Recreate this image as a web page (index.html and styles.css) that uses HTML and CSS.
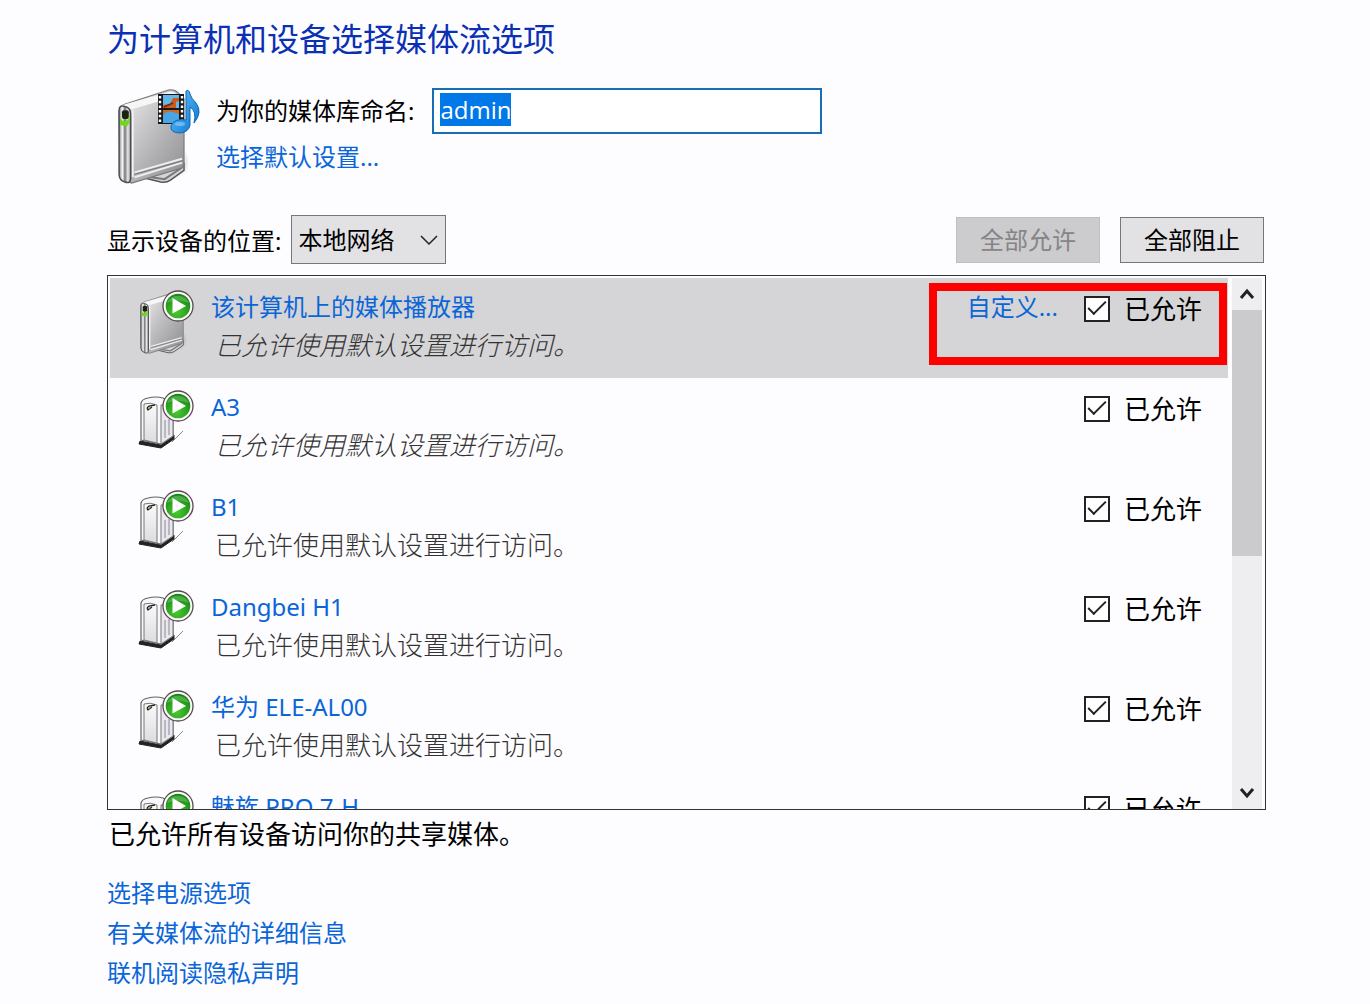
FILE: index.html
```html
<!DOCTYPE html>
<html lang="zh-CN">
<head>
  <meta charset="UTF-8">
  <meta name="viewport" content="width=device-width, initial-scale=1.0">
  <title>媒体流选项</title>
  <link rel="stylesheet" href="styles.css">
</head>
<body>
  <!-- shared icons -->
  <svg class="defs" aria-hidden="true">
    <defs>
      <linearGradient id="metal" x1="0" y1="0" x2="1" y2="1">
        <stop offset="0" stop-color="#f2f2f2"/>
        <stop offset="0.5" stop-color="#bcbcbe"/>
        <stop offset="1" stop-color="#8c8c90"/>
      </linearGradient>
      <linearGradient id="edge" x1="0" y1="0" x2="1" y2="0">
        <stop offset="0" stop-color="#8a8a8e"/>
        <stop offset="0.3" stop-color="#f6f6f6"/>
        <stop offset="0.5" stop-color="#77777c"/>
        <stop offset="0.75" stop-color="#e8e8ea"/>
        <stop offset="1" stop-color="#8a8a8e"/>
      </linearGradient>
      <linearGradient id="front" x1="0" y1="0" x2="0" y2="1">
        <stop offset="0" stop-color="#fbfbfc"/>
        <stop offset="1" stop-color="#dcdbdf"/>
      </linearGradient>
      <linearGradient id="note" x1="0" y1="0" x2="1" y2="1">
        <stop offset="0" stop-color="#6cc8f8"/>
        <stop offset="1" stop-color="#0a72d0"/>
      </linearGradient>
      <radialGradient id="green" cx="0.45" cy="0.75" r="0.7">
        <stop offset="0" stop-color="#4cc832"/>
        <stop offset="1" stop-color="#168a12"/>
      </radialGradient>
      <radialGradient id="shade">
        <stop offset="0" stop-color="#000" stop-opacity="0.35"/>
        <stop offset="1" stop-color="#000" stop-opacity="0"/>
      </radialGradient>
    </defs>
    <symbol id="drive" viewBox="0 0 72 98">
      <ellipse cx="50" cy="76" rx="26" ry="18" fill="url(#shade)"/>
      <path d="M24 91 L44 96 Q50 97 54 94 L68 84 V77 L40 86" fill="#d4d4d6" stroke="#55555a" stroke-width="1.5"/>
      <path d="M34 91 L48 93 L66 81" fill="none" stroke="#77777c" stroke-width="2"/>
      <path d="M1 24 Q1 18 6 16 L52 1 Q58 0 62 4 L68 10 V76 Q68 80 64 82 L14 97 L2 92 Z" fill="url(#metal)" stroke="#77777c" stroke-width="1.2"/>
      <path d="M3 17 L52 3 Q57 1 62 7 L14 21 Z" fill="#f6f6f6"/>
      <path d="M15 22 V91" stroke="#f4f4f4" stroke-width="2"/>
      <path d="M17 86 L66 72 M17 91 L66 76" stroke="#ededef" stroke-width="2"/>
      <path d="M17 88 L67 74" stroke="#74747a" stroke-width="1"/>
      <path d="M1 22 Q1 16 7 18 Q13 19 13 26 V92 Q13 98 7 96 Q1 94 1 88 Z" fill="url(#edge)" stroke="#4c4c50" stroke-width="1.5"/>
      <rect x="4" y="22" width="7" height="9" rx="2" fill="#18240c"/>
      <path d="M2 30 L5 33 H9 L12 29 V34 L9 39 L2 37 Z" fill="#6fd81c"/>
    </symbol>
    <symbol id="play" viewBox="0 0 32 32">
      <circle cx="16" cy="16" r="15" fill="#fff" stroke="#5c4650" stroke-width="1.3"/>
      <circle cx="16" cy="16" r="12.3" fill="url(#green)"/>
      <path d="M5 13 A12 12 0 0 1 27 13 Q16 8 5 13" fill="#7cc878" opacity="0.5"/>
      <path d="M10.500 8 L24 16 L10.500 23.500 Z" fill="#fff"/>
    </symbol>
    <symbol id="player" viewBox="0 0 56 66">
      <use href="#drive" x="2" y="2" width="46" height="62"/>
      <use href="#play" x="24" y="0" width="32" height="32"/>
    </symbol>
    <symbol id="device" viewBox="0 0 56 66">
      <path d="M34 52 L45 41" stroke="#888" stroke-width="1"/>
      <path d="M2 51 L23 55 L36 45 V49 L23 58 L1 54 Z" fill="#222" stroke="#222" stroke-width="1"/>
      <path d="M3 13 Q4 9 10 8 Q18 6 25 8 L35 13 L35 46 L23 54 L3 50 Z" fill="#f8f7f9" stroke="#66666a" stroke-width="1.2"/>
      <path d="M23 15 L35 14 V46 L23 54 Z" fill="#e9e8ec" stroke="#77777c" stroke-width="1"/>
      <path d="M6 14 Q12 12 19 15 V53 L6 50 Z" fill="url(#front)" stroke="#77777c" stroke-width="1"/>
      <path d="M27 30 V48 M31 29 V45" stroke="#aaa6b4" stroke-width="1.500"/>
      <path d="M17 15 L11 16 Q8 18 10 20 L14 17" fill="none" stroke="#222" stroke-width="1.3"/>
      <circle cx="11" cy="18" r="1" fill="#5fae3c"/>
      <use href="#play" x="24" y="0" width="32" height="32"/>
    </symbol>
  </svg>

  <main class="page">
    <h1>为计算机和设备选择媒体流选项</h1>

    <section class="library">
      <svg class="library-icon" viewBox="0 0 96 96" aria-hidden="true">
        <use href="#drive" x="11" y="1" width="70" height="95"/>
        <g>
          <rect x="51" y="6" width="26" height="30" fill="#18181c"/>
          <path d="M53 8 V36 M75 8 V36" stroke="#fff" stroke-width="2.400" stroke-dasharray="2.500 2.200"/>
          <rect x="56" y="7" width="16" height="13" fill="#62b8ea"/>
          <path d="M56 17 L63 16 L66 10 H72 V13 L69 14 V20 H56 Z" fill="#c85c1c"/>
          <path d="M57 19 L66 15" stroke="#6a2a10" stroke-width="1.500" fill="none"/>
          <rect x="56" y="22" width="16" height="13" fill="#48a6e4"/>
          <path d="M56 22 H72 V26 L66 24 Q60 22 56 27 Z" fill="#d06a20"/>
          <path d="M79 3 Q82 1 83 6 Q84 10 89 15 Q96 24 87 35 Q90 23 83 19 V37 Q82 44 73 45 Q63 45 64 38 Q67 30 79 32 Z" fill="url(#note)" stroke="#0a68b8" stroke-width="1"/>
          <ellipse cx="73" cy="36" rx="5" ry="2" fill="#8cd4fa" opacity="0.6"/>
        </g>
      </svg>
      <div class="library-form">
        <div class="name-row">
          <label for="libraryName">为你的媒体库命名:</label>
          <input type="text" id="libraryName" value="admin" autocomplete="off" spellcheck="false">
        </div>
        <a href="#">选择默认设置...</a>
      </div>
    </section>

    <section class="toolbar">
      <label for="location">显示设备的位置:</label>
      <div class="select">
        <select id="location">
          <option>本地网络</option>
          <option>所有网络</option>
        </select>
        <svg viewBox="0 0 18 12" aria-hidden="true"><path d="M1 2 L9 10 L17 2"/></svg>
      </div>
      <div class="buttons">
        <button type="button" disabled>全部允许</button>
        <button type="button">全部阻止</button>
      </div>
    </section>

    <section class="list">
      <ul class="devices">
        <li class="device selected">
          <svg class="device-icon" aria-hidden="true"><use href="#player"/></svg>
          <div class="info">
            <a href="#">该计算机上的媒体播放器</a>
            <p class="default">已允许使用默认设置进行访问。</p>
          </div>
          <a class="customize" href="#">自定义...</a>
          <label class="allow"><input type="checkbox" checked>已允许</label>
          <span class="marker"></span>
        </li>
        <li class="device">
          <svg class="device-icon" aria-hidden="true"><use href="#device"/></svg>
          <div class="info">
            <a href="#">A3</a>
            <p class="default">已允许使用默认设置进行访问。</p>
          </div>
          <label class="allow"><input type="checkbox" checked>已允许</label>
        </li>
        <li class="device">
          <svg class="device-icon" aria-hidden="true"><use href="#device"/></svg>
          <div class="info">
            <a href="#">B1</a>
            <p>已允许使用默认设置进行访问。</p>
          </div>
          <label class="allow"><input type="checkbox" checked>已允许</label>
        </li>
        <li class="device">
          <svg class="device-icon" aria-hidden="true"><use href="#device"/></svg>
          <div class="info">
            <a href="#">Dangbei H1</a>
            <p>已允许使用默认设置进行访问。</p>
          </div>
          <label class="allow"><input type="checkbox" checked>已允许</label>
        </li>
        <li class="device">
          <svg class="device-icon" aria-hidden="true"><use href="#device"/></svg>
          <div class="info">
            <a href="#">华为 ELE-AL00</a>
            <p>已允许使用默认设置进行访问。</p>
          </div>
          <label class="allow"><input type="checkbox" checked>已允许</label>
        </li>
        <li class="device">
          <svg class="device-icon" aria-hidden="true"><use href="#device"/></svg>
          <div class="info">
            <a href="#">魅族 PRO 7-H</a>
          </div>
          <label class="allow"><input type="checkbox" checked>已允许</label>
        </li>
      </ul>
      <div class="scrollbar">
        <button type="button" aria-label="向上滚动"><svg viewBox="0 0 16 14"><path d="M2 11 L8 4 L14 11"/></svg></button>
        <div class="thumb"></div>
        <button type="button" aria-label="向下滚动"><svg viewBox="0 0 16 14"><path d="M2 3 L8 10 L14 3"/></svg></button>
      </div>
    </section>

    <p class="summary">已允许所有设备访问你的共享媒体。</p>

    <nav class="links">
      <a href="#">选择电源选项</a>
      <a href="#">有关媒体流的详细信息</a>
      <a href="#">联机阅读隐私声明</a>
    </nav>
  </main>

  <script>
    const libraryName = document.getElementById('libraryName');
    libraryName.focus();
    libraryName.select();
  </script>
</body>
</html>
```
FILE: styles.css
```css
*, *::after {
  box-sizing: border-box;
}
body {
  margin: 0;
  background: #fdfcfe;
  color: #000;
  font-family: "Noto Sans", "Noto Sans CJK SC", sans-serif;
  font-size: 24px;
  font-weight: 400;
}
h1, p, ul {
  margin: 0;
  padding: 0;
}
a {
  color: #0a66d8;
  text-decoration: none;
}
a:hover {
  text-decoration: underline;
}
input, select, button {
  font: inherit;
  color: inherit;
  border-radius: 0;
}
.defs {
  position: absolute;
  width: 0;
  height: 0;
}
.page {
  padding: 15px 104px 8px 107px;
}
h1 {
  font-size: 32px;
  font-weight: 400;
  line-height: 48px;
  color: #0a30b4;
}

/* library name */
.library {
  display: flex;
  gap: 13px;
  margin-top: 25px;
}
.library-icon {
  width: 96px;
  height: 96px;
}
.library-form {
  display: flex;
  flex-direction: column;
  align-items: flex-start;
  line-height: 46px;
}
.name-row {
  display: flex;
  align-items: center;
  gap: 18px;
  height: 46px;
}
.name-row input {
  width: 390px;
  height: 46px;
  padding: 0 6px 4px;
  border: 2px solid #1a6cb4;
  background: #fff;
  outline: none;
  font-family: "Open Sans", sans-serif;
  line-height: 30px;
}
.name-row input::selection {
  background: #0078e8;
  color: #fff;
}

/* toolbar */
.toolbar {
  display: flex;
  align-items: center;
  gap: 10px;
  margin-top: 31px;
  padding-right: 2px;
}
.select {
  position: relative;
}
.select select {
  display: block;
  width: 155px;
  height: 49px;
  padding: 0 40px 0 6px;
  border: 1px solid #77767a;
  background: #e2e1e3;
  appearance: none;
}
.select svg {
  position: absolute;
  right: 8px;
  top: 19px;
  width: 18px;
  height: 12px;
  pointer-events: none;
}
.select path, .scrollbar path {
  fill: none;
  stroke: #222;
}
.select path {
  stroke-width: 1.5;
}
.buttons {
  display: flex;
  gap: 20px;
  margin-left: auto;
}
.buttons button {
  width: 144px;
  height: 46px;
  padding: 0 0 2px;
  border: 1px solid #77767a;
  background: #e2e1e3;
}
.buttons button:disabled {
  border-color: #bfbec0;
  background: #cccbcd;
  color: #858487;
}

/* device list */
.list {
  display: flex;
  gap: 4px;
  height: 535px;
  margin-top: 11px;
  padding: 2px 3px 0 2px;
  border: 1px solid #333;
  overflow: hidden;
}
.devices {
  flex: 1;
  list-style: none;
}
.device {
  position: relative;
  display: flex;
  align-items: flex-start;
  height: 100px;
  padding: 10px 26px 0 28px;
  line-height: 38px;
}
.selected {
  background: #d5d4d6;
}
.device-icon {
  width: 56px;
  height: 66px;
  margin-top: 2px;
}
.info {
  flex: 1;
  margin-left: 17px;
}
.info p {
  padding-left: 4px;
  font-size: 26px;
  font-weight: 300;
  color: #333;
}
.info .default {
  font-style: italic;
}
.customize {
  margin-right: 26px;
}
.allow {
  display: flex;
  align-items: center;
  gap: 14px;
  font-size: 26px;
  line-height: 42px;
}
.allow input {
  appearance: none;
  position: relative;
  width: 26px;
  height: 26px;
  margin: 0;
  border: 2px solid #222;
  background: #fff;
}
.allow input:checked::after {
  content: "";
  position: absolute;
  left: 2px;
  top: 3px;
  width: 18px;
  height: 9px;
  border-left: 2px solid #222;
  border-bottom: 2px solid #222;
  transform: rotate(-45deg);
}
.marker {
  position: absolute;
  top: 5px;
  right: 1px;
  width: 298px;
  height: 82px;
  border: 8px solid #fe0000;
  pointer-events: none;
}
.scrollbar {
  display: flex;
  flex-direction: column;
  width: 30px;
  background: #eeedef;
}
.scrollbar button {
  display: flex;
  align-items: center;
  justify-content: center;
  height: 32px;
  padding: 0;
  border: none;
  background: none;
}
.scrollbar button:last-child {
  margin-top: auto;
}
.scrollbar svg {
  width: 16px;
  height: 14px;
}
.scrollbar path {
  stroke-width: 3;
}
.thumb {
  height: 246px;
  background: #cbcacc;
}

.summary {
  padding-left: 2px;
  font-size: 26px;
  line-height: 48px;
}
.links {
  display: flex;
  flex-direction: column;
  align-items: flex-start;
  margin-top: 15px;
  line-height: 40px;
}
```
